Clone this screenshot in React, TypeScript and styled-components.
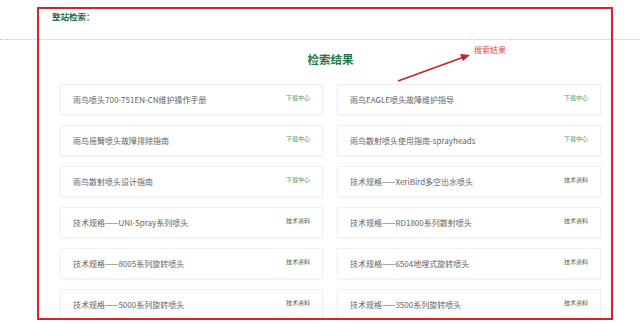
import React from 'react'
import styled, { createGlobalStyle } from 'styled-components'

type Item = { title: string; tag: string }

const items: Item[] = [
  { title: '雨鸟喷头700-751EN-CN维护操作手册', tag: '下载中心' },
  { title: '雨鸟EAGLE喷头故障维护指导', tag: '下载中心' },
  { title: '雨鸟摇臂喷头故障排除指南', tag: '下载中心' },
  { title: '雨鸟散射喷头使用指南-sprayheads', tag: '下载中心' },
  { title: '雨鸟散射喷头设计指南', tag: '下载中心' },
  { title: '技术规格——XeriBird多空出水喷头', tag: '技术资料' },
  { title: '技术规格——UNI-Spray系列喷头', tag: '技术资料' },
  { title: '技术规格——RD1800系列散射喷头', tag: '技术资料' },
  { title: '技术规格——8005系列旋转喷头', tag: '技术资料' },
  { title: '技术规格——6504地埋式旋转喷头', tag: '技术资料' },
  { title: '技术规格——5000系列旋转喷头', tag: '技术资料' },
  { title: '技术规格——3500系列旋转喷头', tag: '技术资料' },
]

const App = () => {
  return (
    <Page>
      <GlobalStyle />
      <Header>
        <SiteSearch>整站检索：</SiteSearch>
      </Header>
      <Content>
        <ResultTitle>检索结果</ResultTitle>
        <Grid>
          {items.map((it) => (
            <Card key={it.title}>
              <CardTitle>{it.title}</CardTitle>
              <Tag $kind={it.tag === '下载中心' ? 'download' : 'doc'}>{it.tag}</Tag>
            </Card>
          ))}
        </Grid>
      </Content>

      <Frame />
      <Arrow width="80" height="34" viewBox="0 0 80 34">
        <line x1="2" y1="31" x2="68" y2="7" stroke="#c81f2b" strokeWidth="1.6" />
        <polygon points="74,5 64,4 67,11" fill="#c81f2b" />
      </Arrow>
      <Note>搜索结果</Note>
    </Page>
  )
}

export default App

const GlobalStyle = createGlobalStyle`
  html, body {
    margin: 0;
    padding: 0;
    background: #fff;
  }
  body {
    font-family: "Noto Sans CJK SC", "Noto Sans", sans-serif;
  }
`
const Page = styled.div`
  position: relative;
  width: 640px;
  height: 324px;
  overflow: hidden;
  background: #fff;
  display: flex;
  flex-direction: column;
`
const Header = styled.div`
  height: 40px;
  box-sizing: border-box;
  padding: 10px 0 0 52px;
  border-bottom: 1px dotted #c4c4c4;
`
const SiteSearch = styled.div`
  font-size: 8.5px;
  font-weight: 700;
  color: #1d6b45;
  line-height: 12px;
`
const Content = styled.div`
  padding-left: 60px;
  width: 541px;
  display: flex;
  flex-direction: column;
`
const ResultTitle = styled.div`
  text-align: center;
  font-size: 11.5px;
  font-weight: 700;
  color: #1f7a4d;
  line-height: 16px;
  margin-top: 11px;
  margin-bottom: 17px;
`
const Grid = styled.div`
  display: grid;
  grid-template-columns: 263px 264px;
  column-gap: 14px;
  row-gap: 10px;
`
const Card = styled.div`
  height: 31px;
  box-sizing: border-box;
  border: 1px solid #f0f0f0;
  box-shadow: 0 1px 2px rgba(0, 0, 0, 0.05);
  display: flex;
  align-items: center;
  justify-content: space-between;
  padding: 0 12px 0 12px;
  background: #fff;
`
const CardTitle = styled.div`
  font-size: 8px;
  color: #636363;
  white-space: nowrap;
`
const Tag = styled.div<{ $kind: 'download' | 'doc' }>`
  font-size: 6px;
  color: ${(p) => (p.$kind === 'download' ? '#3c9a6a' : '#2f6b57')};
  margin-top: -4px;
  white-space: nowrap;
`
const Frame = styled.div`
  position: absolute;
  left: 37px;
  top: 7px;
  width: 576px;
  height: 313px;
  box-sizing: border-box;
  border: 2px solid #d3242e;
  pointer-events: none;
`
const Arrow = styled.svg`
  position: absolute;
  left: 396px;
  top: 50px;
`
const Note = styled.div`
  position: absolute;
  left: 474px;
  top: 44px;
  font-size: 8px;
  color: #e04a48;
  line-height: 12px;
`
